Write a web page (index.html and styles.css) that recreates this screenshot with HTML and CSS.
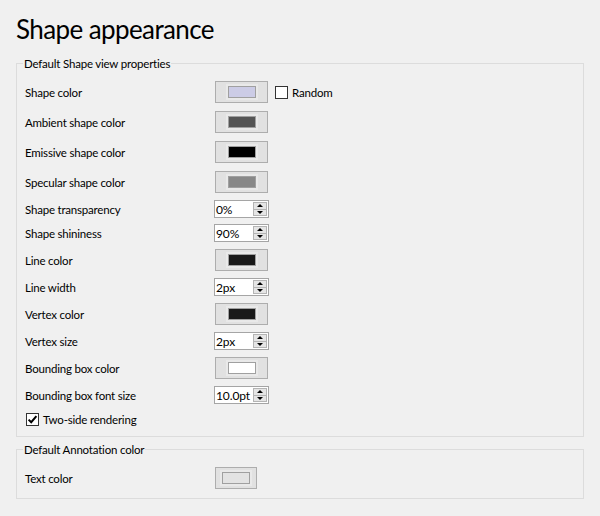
FILE: index.html
```html
<!DOCTYPE html>
<html>
<head>
<meta charset="utf-8">
<link rel="stylesheet" href="styles.css">
</head>
<body>
<div class="page">
  <h1 class="title">Shape appearance</h1>

  <fieldset class="group group-shape">
    <legend>Default Shape view properties</legend>
    <div class="form">
      <div class="label">Shape color</div>
      <div class="ctrl">
        <button class="color-btn"><span class="well"><span class="swatch sw-lavender"></span></span></button>
        <label class="check"><span class="box"></span><span class="check-text">Random</span></label>
      </div>

      <div class="label">Ambient shape color</div>
      <div class="ctrl"><button class="color-btn"><span class="well"><span class="swatch sw-dim"></span></span></button></div>

      <div class="label">Emissive shape color</div>
      <div class="ctrl"><button class="color-btn"><span class="well"><span class="swatch sw-black"></span></span></button></div>

      <div class="label">Specular shape color</div>
      <div class="ctrl"><button class="color-btn"><span class="well"><span class="swatch sw-gray"></span></span></button></div>

      <div class="label">Shape transparency</div>
      <div class="ctrl"><div class="spin"><span class="spin-text">0%</span><span class="spin-btns"><span class="up"><i></i></span><span class="down"><i></i></span></span></div></div>

      <div class="label">Shape shininess</div>
      <div class="ctrl"><div class="spin"><span class="spin-text">90%</span><span class="spin-btns"><span class="up"><i></i></span><span class="down"><i></i></span></span></div></div>

      <div class="label">Line color</div>
      <div class="ctrl"><button class="color-btn"><span class="well"><span class="swatch sw-dark"></span></span></button></div>

      <div class="label">Line width</div>
      <div class="ctrl"><div class="spin"><span class="spin-text">2px</span><span class="spin-btns"><span class="up"><i></i></span><span class="down"><i></i></span></span></div></div>

      <div class="label">Vertex color</div>
      <div class="ctrl"><button class="color-btn"><span class="well"><span class="swatch sw-dark"></span></span></button></div>

      <div class="label">Vertex size</div>
      <div class="ctrl"><div class="spin"><span class="spin-text">2px</span><span class="spin-btns"><span class="up"><i></i></span><span class="down"><i></i></span></span></div></div>

      <div class="label">Bounding box color</div>
      <div class="ctrl"><button class="color-btn"><span class="well"><span class="swatch sw-white"></span></span></button></div>

      <div class="label">Bounding box font size</div>
      <div class="ctrl"><div class="spin"><span class="spin-text">10.0pt</span><span class="spin-btns"><span class="up"><i></i></span><span class="down"><i></i></span></span></div></div>

      <label class="check check-row"><span class="box checked"><svg width="11" height="11" viewBox="0 0 11 11"><path d="M1.6 5.6 L4.2 8.2 L9.4 2.2" fill="none" stroke="#000" stroke-width="2"/></svg></span><span class="check-text">Two-side rendering</span></label>
    </div>
  </fieldset>

  <fieldset class="group group-annot">
    <legend>Default Annotation color</legend>
    <div class="form">
      <div class="label">Text color</div>
      <div class="ctrl"><button class="color-btn small"><span class="well"><span class="swatch sw-light"></span></span></button></div>
    </div>
  </fieldset>
</div>
</body>
</html>
```

FILE: styles.css
```css
html, body {
  margin: 0;
  padding: 0;
  background: #f0f0f0;
}

body {
  font-family: "Lato", "Liberation Sans", sans-serif;
  font-size: 11.5px;
  letter-spacing: -0.2px;
  line-height: 16px;
  color: #000;
}

.page {
  padding: 13px 16px 0 16px;
}

.title {
  margin: 0;
  font-size: 26px;
  line-height: 32px;
  font-weight: normal;
  letter-spacing: -0.6px;
}

.group {
  margin: 0;
  min-width: 0;
  border: 1px solid #dcdcdc;
  padding: 9px 8px 8px 8px;
}

.group-shape {
  margin-top: 10px;
}

.group-annot {
  margin-top: 4px;
}

.group legend {
  padding: 2px 1px 0 1px;
  margin-left: -2px;
  line-height: 14px;
}

.form {
  display: grid;
  grid-template-columns: 189px 1fr;
  row-gap: 6px;
  align-items: center;
}

.label {
  white-space: nowrap;
  padding-top: 2px;
  line-height: 14px;
}

.ctrl {
  display: flex;
  align-items: center;
  gap: 6px;
}

.color-btn {
  box-sizing: border-box;
  width: 53px;
  height: 22px;
  margin: 1px;
  padding: 0;
  border: 1px solid #adadad;
  background: #e1e1e1;
  display: flex;
  align-items: center;
  justify-content: center;
  font: inherit;
}

.color-btn.small {
  width: 42px;
}

.well {
  display: flex;
  align-items: center;
  justify-content: center;
  width: 32px;
  height: 16px;
  background: #e9e9e9;
}

.swatch {
  box-sizing: border-box;
  display: block;
  width: 28px;
  height: 12px;
  border: 1px solid #a0a0a0;
}

.sw-lavender { background: #ccccE6; }
.sw-dim { background: #555555; }
.sw-black { background: #000000; }
.sw-gray { background: #888888; }
.sw-dark { background: #191919; }
.sw-white { background: #ffffff; }
.sw-light { background: #e3e3e3; }

.check {
  display: flex;
  align-items: center;
  gap: 4px;
  height: 18px;
}

.check-text {
  padding-top: 2px;
  line-height: 14px;
}

.check .box {
  box-sizing: border-box;
  width: 13px;
  height: 13px;
  border: 1px solid #333;
  background: #fff;
  display: flex;
  align-items: center;
  justify-content: center;
}

.check-row {
  grid-column: 1 / -1;
  padding-left: 1px;
}

.spin {
  box-sizing: border-box;
  width: 55px;
  height: 18px;
  border: 1px solid #a5a5a5;
  background: #fff;
  display: flex;
  align-items: stretch;
}

.spin-text {
  flex: 1;
  padding: 1px 0 0 1px;
  line-height: 15px;
  font-size: 12px;
  letter-spacing: -0.1px;
}

.spin-btns {
  width: 14px;
  margin: 1px 1px 1px 0;
  display: flex;
  flex-direction: column;
}

.spin-btns .up,
.spin-btns .down {
  flex: 1;
  box-sizing: border-box;
  display: flex;
  align-items: center;
  justify-content: center;
  background: #e5e5e5;
  border: 1px solid #b4b4b4;
}

.spin-btns .down {
  border-top: 0;
}

.spin-btns .up i {
  width: 0;
  height: 0;
  border-left: 3px solid transparent;
  border-right: 3px solid transparent;
  border-bottom: 3px solid #000;
}

.spin-btns .down i {
  width: 0;
  height: 0;
  border-left: 3px solid transparent;
  border-right: 3px solid transparent;
  border-top: 3px solid #000;
}
```
